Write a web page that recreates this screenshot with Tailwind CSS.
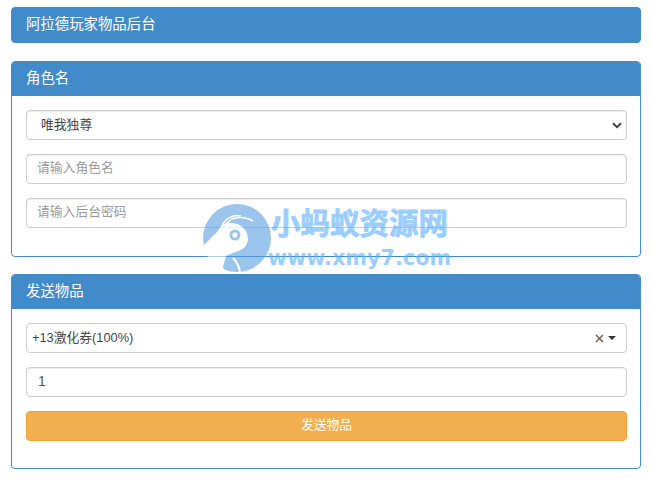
<!DOCTYPE html>
<html lang="zh-CN">
<head>
<meta charset="UTF-8">
<meta name="viewport" content="width=device-width, initial-scale=1.0">
<title>阿拉德玩家物品后台</title>
<script src="https://cdn.jsdelivr.net/npm/@tailwindcss/browser@4"></script>
</head>
<body class="relative bg-white h-[478px] overflow-hidden font-['Liberation_Sans','Noto_Sans_CJK_SC',sans-serif] text-[12.8px] text-[#555]">
<main class="flex flex-col pl-[11px] pr-[10px] pt-[7px]">
  <!-- title -->
  <div class="h-[36px] rounded-[4px] border border-[#428bca] bg-[#428bca] pl-[14px] pb-[1px] flex items-center text-white text-[14.4px]">阿拉德玩家物品后台</div>

  <!-- role -->
  <section class="mt-[18px] h-[196px] rounded-[4px] border border-[#428bca] overflow-hidden">
    <div class="h-[34px] bg-[#428bca] pl-[14px] flex items-center text-white text-[14.4px]">角色名</div>
    <div class="flex flex-col gap-[14px] pt-[14px] pl-[14px] pr-[13px]">
      <div class="h-[30px] rounded-[4px] border border-[#ccc] shadow-[inset_0_1px_1px_rgba(0,0,0,0.075)] pl-[14px] pr-[4px] pb-[1px] flex items-center justify-between text-[#444]">
        <span>唯我独尊</span>
        <svg class="w-[10px] h-[7px] mt-[1px]" viewBox="0 0 10 7"><path d="M1 1.2 L5 5.2 L9 1.2" fill="none" stroke="#444" stroke-width="2"/></svg>
      </div>
      <input class="h-[30px] rounded-[4px] border border-[#ccc] shadow-[inset_0_1px_1px_rgba(0,0,0,0.075)] px-[10px] pb-[3px] text-[12.8px] placeholder:text-[#999]" placeholder="请输入角色名">
      <input class="h-[30px] rounded-[4px] border border-[#ccc] shadow-[inset_0_1px_1px_rgba(0,0,0,0.075)] px-[10px] pb-[3px] text-[12.8px] placeholder:text-[#999]" placeholder="请输入后台密码">
    </div>
  </section>

  <!-- send item -->
  <section class="mt-[17px] h-[195px] rounded-[4px] border border-[#428bca] overflow-hidden">
    <div class="h-[34px] bg-[#428bca] pl-[14px] flex items-center text-white text-[14.4px]">发送物品</div>
    <div class="flex flex-col gap-[14px] pt-[14px] pl-[14px] pr-[13px]">
      <div class="h-[30px] rounded-[4px] border border-[#ccc] pl-[5px] pr-[10px] flex items-center justify-between text-[#444]">
        <span>+13激化券(100%)</span>
        <span class="flex items-center gap-[4px]">
          <svg class="w-[9px] h-[9px]" viewBox="0 0 9 9"><path d="M1 1 L8 8 M8 1 L1 8" stroke="#7a5a4a" stroke-width="1.5"/></svg>
          <span class="w-0 h-0 border-x-[4px] border-x-transparent border-t-[4px] border-t-[#333]"></span>
        </span>
      </div>
      <input class="h-[30px] rounded-[4px] border border-[#ccc] shadow-[inset_0_1px_1px_rgba(0,0,0,0.075)] px-[11px] pb-[2px] text-[14px] text-[#555]" value="1">
      <button class="h-[30px] rounded-[4px] border border-[#eea236] bg-[#f3ae4f] pb-[3px] text-white text-[12.8px]">发送物品</button>
    </div>
  </section>
</main>

<!-- watermark -->
<div class="absolute left-[203px] top-[204px] flex items-start opacity-60 pointer-events-none">
  <svg class="w-[68px] h-[68px]" viewBox="0 0 68 68">
    <circle cx="34" cy="34" r="34" fill="#5a9fe0"/>
    <path d="M0 42 L15 27 C18 20 24 18 28 19 C36 19 44 24 45 34 C45 42 40 46 30 49 L23 52 L20 63 L22 68 L10 60 C5 54 2 48 0 42 Z" fill="#fff"/>
    <path d="M19 22 C22 14 32 10 38 12 M24 19 C30 12 42 12 50 17" fill="none" stroke="#fff" stroke-width="1.6"/>
    <path d="M30 54 C34 58 36 62 37 68" fill="none" stroke="#fff" stroke-width="2"/>
    <circle cx="32" cy="31" r="5.5" fill="#5a9fe0"/>
    <circle cx="32" cy="31" r="2.6" fill="#fff"/>
  </svg>
  <div class="flex flex-col items-center w-[183px] -ml-[3px]">
    <span class="font-['Noto_Sans_CJK_SC',sans-serif] text-[29.5px] leading-[38px] -mt-[2px] font-bold text-[#5aafff] [-webkit-text-stroke:0.8px_#5aafff]">小蚂蚁资源网</span>
    <span class="font-['DejaVu_Sans',sans-serif] text-[20.8px] leading-[24px] mt-[6px] font-bold text-[#5aafff]">www.xmy7.com</span>
  </div>
</div>
</body>
</html>
